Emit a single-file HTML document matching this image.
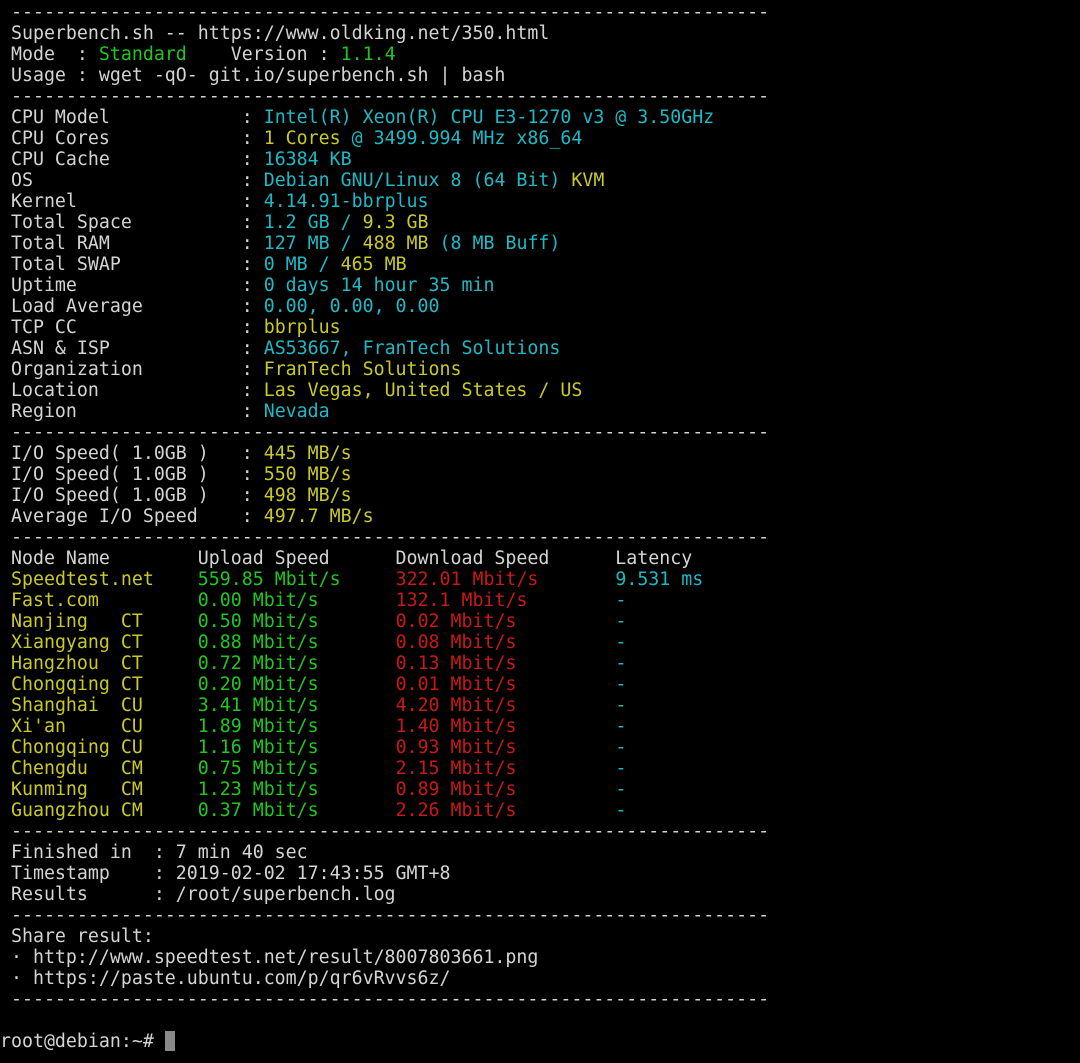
<!DOCTYPE html>
<html><head><meta charset="utf-8"><style>
html,body{margin:0;padding:0;background:#000;width:1080px;height:1063px;overflow:hidden}
pre{margin:0;padding:2px 0 0 0;font-family:"DejaVu Sans Mono","Liberation Mono",monospace;font-size:18.25px;line-height:21px;color:#d4d4d4;white-space:pre}
.g{color:#1fc71f}.y{color:#c9c928}.c{color:#1db9c6}.r{color:#c81818}
.cur{display:inline-block;width:10px;height:20px;background:#8a8a8a;vertical-align:-4px}
</style></head><body><pre> ---------------------------------------------------------------------
 Superbench.sh -- https://www.oldking.net/350.html
 Mode  : <span class="g">Standard</span>    Version : <span class="g">1.1.4</span>
 Usage : wget -qO- git.io/superbench.sh | bash
 ---------------------------------------------------------------------
 CPU Model            : <span class="c">Intel(R) Xeon(R) CPU E3-1270 v3 @ 3.50GHz</span>
 CPU Cores            : <span class="y">1 Cores</span> <span class="c">@ 3499.994 MHz x86_64</span>
 CPU Cache            : <span class="c">16384 KB</span>
 OS                   : <span class="c">Debian GNU/Linux 8 (64 Bit)</span> <span class="y">KVM</span>
 Kernel               : <span class="c">4.14.91-bbrplus</span>
 Total Space          : <span class="c">1.2 GB /</span> <span class="y">9.3 GB</span>
 Total RAM            : <span class="c">127 MB /</span> <span class="y">488 MB</span> <span class="c">(8 MB Buff)</span>
 Total SWAP           : <span class="c">0 MB /</span> <span class="y">465 MB</span>
 Uptime               : <span class="c">0 days 14 hour 35 min</span>
 Load Average         : <span class="c">0.00, 0.00, 0.00</span>
 TCP CC               : <span class="y">bbrplus</span>
 ASN &amp; ISP            : <span class="c">AS53667, FranTech Solutions</span>
 Organization         : <span class="y">FranTech Solutions</span>
 Location             : <span class="y">Las Vegas, United States / US</span>
 Region               : <span class="c">Nevada</span>
 ---------------------------------------------------------------------
 I/O Speed( 1.0GB )   : <span class="y">445 MB/s</span>
 I/O Speed( 1.0GB )   : <span class="y">550 MB/s</span>
 I/O Speed( 1.0GB )   : <span class="y">498 MB/s</span>
 Average I/O Speed    : <span class="y">497.7 MB/s</span>
 ---------------------------------------------------------------------
 Node Name        Upload Speed      Download Speed      Latency
 <span class="y">Speedtest.net</span>    <span class="g">559.85 Mbit/s</span>     <span class="r">322.01 Mbit/s</span>       <span class="c">9.531 ms</span>
 <span class="y">Fast.com</span>         <span class="g">0.00 Mbit/s</span>       <span class="r">132.1 Mbit/s</span>        <span class="c">-</span>
 <span class="y">Nanjing   CT</span>     <span class="g">0.50 Mbit/s</span>       <span class="r">0.02 Mbit/s</span>         <span class="c">-</span>
 <span class="y">Xiangyang CT</span>     <span class="g">0.88 Mbit/s</span>       <span class="r">0.08 Mbit/s</span>         <span class="c">-</span>
 <span class="y">Hangzhou  CT</span>     <span class="g">0.72 Mbit/s</span>       <span class="r">0.13 Mbit/s</span>         <span class="c">-</span>
 <span class="y">Chongqing CT</span>     <span class="g">0.20 Mbit/s</span>       <span class="r">0.01 Mbit/s</span>         <span class="c">-</span>
 <span class="y">Shanghai  CU</span>     <span class="g">3.41 Mbit/s</span>       <span class="r">4.20 Mbit/s</span>         <span class="c">-</span>
 <span class="y">Xi'an     CU</span>     <span class="g">1.89 Mbit/s</span>       <span class="r">1.40 Mbit/s</span>         <span class="c">-</span>
 <span class="y">Chongqing CU</span>     <span class="g">1.16 Mbit/s</span>       <span class="r">0.93 Mbit/s</span>         <span class="c">-</span>
 <span class="y">Chengdu   CM</span>     <span class="g">0.75 Mbit/s</span>       <span class="r">2.15 Mbit/s</span>         <span class="c">-</span>
 <span class="y">Kunming   CM</span>     <span class="g">1.23 Mbit/s</span>       <span class="r">0.89 Mbit/s</span>         <span class="c">-</span>
 <span class="y">Guangzhou CM</span>     <span class="g">0.37 Mbit/s</span>       <span class="r">2.26 Mbit/s</span>         <span class="c">-</span>
 ---------------------------------------------------------------------
 Finished in  : 7 min 40 sec
 Timestamp    : 2019-02-02 17:43:55 GMT+8
 Results      : /root/superbench.log
 ---------------------------------------------------------------------
 Share result:
 · http://www.speedtest.net/result/8007803661.png
 · https://paste.ubuntu.com/p/qr6vRvvs6z/
 ---------------------------------------------------------------------

root@debian:~# <span class="cur"></span></pre></body></html>
